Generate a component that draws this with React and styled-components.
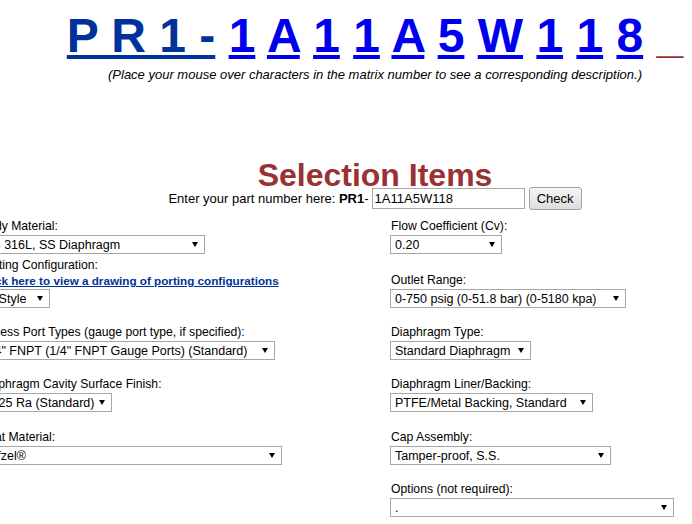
import React from "react";
import styled, { createGlobalStyle } from "styled-components";

const Global = createGlobalStyle`
  html, body { margin: 0; padding: 0; overflow: hidden; background: #fff; }
  body { font-family: "Liberation Sans", Arial, sans-serif; color: #000; }
`;

const Page = styled.div`
  width: 800px;
  margin-left: -25px;
  padding-top: 8px;
`;

const Matrix = styled.div`
  text-align: center;
  font-size: 48px;
  font-weight: bold;
  white-space: nowrap;
`;

const Prefix = styled.a`
  color: #003399;
  text-decoration: underline;
`;

const Code = styled.a`
  color: ${(p) => (p.$blank ? "#993333" : "#0000ee")};
  text-decoration: ${(p) => (p.$blank ? "none" : "underline")};
`;

const Hint = styled.div`
  margin-top: 4px;
  text-align: center;
  font-size: 13px;
  font-style: italic;
`;

const Heading = styled.div`
  margin-top: 81px;
  text-align: center;
  font-size: 32px;
  line-height: 24px;
  font-weight: bold;
  color: #993333;
`;

const EnterRow = styled.div`
  height: 23px;
  display: flex;
  justify-content: center;
  align-items: center;
  font-size: 13px;
`;

const PartInput = styled.input`
  box-sizing: border-box;
  width: 153px;
  height: 21px;
  margin: 0 0 0 3px;
  padding: 0 2px;
  border: 1px solid #a9a9a9;
  font-family: inherit;
  font-size: 13px;
  color: #000;
  outline: none;
`;

const CheckButton = styled.button`
  box-sizing: border-box;
  width: 53px;
  height: 23px;
  margin-left: 4px;
  padding: 0;
  border: 1px solid #a3a3a3;
  border-radius: 3px;
  background: linear-gradient(#f7f7f7, #dcdcdc);
  font-family: inherit;
  font-size: 13px;
  color: #000;
`;

const Form = styled.div`
  padding-left: 4px;
`;

const Row = styled.div`
  display: grid;
  grid-template-columns: 411px 1fr;
  align-items: end;
  margin-top: ${(p) => p.$gap}px;
`;

const Field = styled.div`
  display: flex;
  flex-direction: column;
  align-items: flex-start;
`;

const Label = styled.div`
  margin-left: 1px;
  font-size: 12.2px;
  line-height: 16px;
  white-space: nowrap;
`;

const DrawingLink = styled.a`
  margin-left: 1px;
  font-size: 11.7px;
  line-height: 16px;
  font-weight: bold;
  color: #003399;
  text-decoration: underline;
  white-space: nowrap;
`;

const SelectBox = styled.div`
  box-sizing: border-box;
  width: ${(p) => p.$w}px;
  height: 19px;
  margin-top: ${(p) => (p.$tight ? 0 : 1)}px;
  padding: 0 6px 0 4px;
  display: flex;
  align-items: center;
  justify-content: space-between;
  gap: 4px;
  border: 1px solid #a6a6a6;
  background: #fff;
  font-size: 12.5px;
  white-space: nowrap;
`;

const Value = styled.span`
  overflow: hidden;
`;

const Arrow = () => (
  <svg width="6" height="5" viewBox="0 0 6 5" style={{ flex: "none" }}>
    <polygon points="0,0 6,0 3,5" fill="#000" />
  </svg>
);

const Select = ({ w, value, tight }) => (
  <SelectBox $w={w} $tight={tight}>
    <Value>{value}</Value>
    <Arrow />
  </SelectBox>
);

const chars = ["1", "A", "1", "1", "A", "5", "W", "1", "1", "8"];

const rows = [
  {
    gap: 8,
    left: { label: "Body Material:", w: 226, value: "SS 316L, SS Diaphragm" },
    right: { label: "Flow Coefficient (Cv):", w: 112, value: "0.20" },
  },
  {
    gap: 3,
    left: {
      label: "Porting Configuration:",
      link: "Click here to view a drawing of porting configurations",
      w: 71,
      value: "M-Style",
    },
    right: { label: "Outlet Range:", w: 236, value: "0-750 psig (0-51.8 bar) (0-5180 kpa)" },
  },
  {
    gap: 16,
    left: {
      label: "Access Port Types (gauge port type, if specified):",
      w: 296,
      value: '1/4" FNPT (1/4" FNPT Gauge Ports) (Standard)',
    },
    right: { label: "Diaphragm Type:", w: 141, value: "Standard Diaphragm" },
  },
  {
    gap: 16,
    left: { label: "Diaphragm Cavity Surface Finish:", w: 133, value: "<=25 Ra (Standard)" },
    right: { label: "Diaphragm Liner/Backing:", w: 203, value: "PTFE/Metal Backing, Standard" },
  },
  {
    gap: 17,
    left: { label: "Seat Material:", w: 303, value: "Tefzel®" },
    right: { label: "Cap Assembly:", w: 221, value: "Tamper-proof, S.S." },
  },
  {
    gap: 16,
    left: null,
    right: { label: "Options (not required):", w: 284, value: "." },
  },
];

const FieldCell = ({ f }) => {
  if (!f) return <div />;
  return (
    <Field>
      <Label>{f.label}</Label>
      {f.link && <DrawingLink href="#">{f.link}</DrawingLink>}
      <Select w={f.w} value={f.value} tight={!!f.link} />
    </Field>
  );
};

export default function App() {
  return (
    <>
      <Global />
      <Page>
        <Matrix>
          <Prefix href="#">P R 1 -</Prefix>
          {chars.map((c, i) => (
            <React.Fragment key={i}>
              {" "}
              <Code href="#">{c}</Code>
            </React.Fragment>
          ))}{" "}
          <Code href="#" $blank>
            _
          </Code>
        </Matrix>
        <Hint>
          (Place your mouse over characters in the matrix number to see a corresponding description.)
        </Hint>
        <Heading>Selection Items</Heading>
        <EnterRow>
          Enter your part number here:&nbsp;<b>PR1</b>-
          <PartInput defaultValue="1A11A5W118" />
          <CheckButton>Check</CheckButton>
        </EnterRow>
        <Form>
          {rows.map((r, i) => (
            <Row key={i} $gap={r.gap}>
              <FieldCell f={r.left} />
              <FieldCell f={r.right} />
            </Row>
          ))}
        </Form>
      </Page>
    </>
  );
}
